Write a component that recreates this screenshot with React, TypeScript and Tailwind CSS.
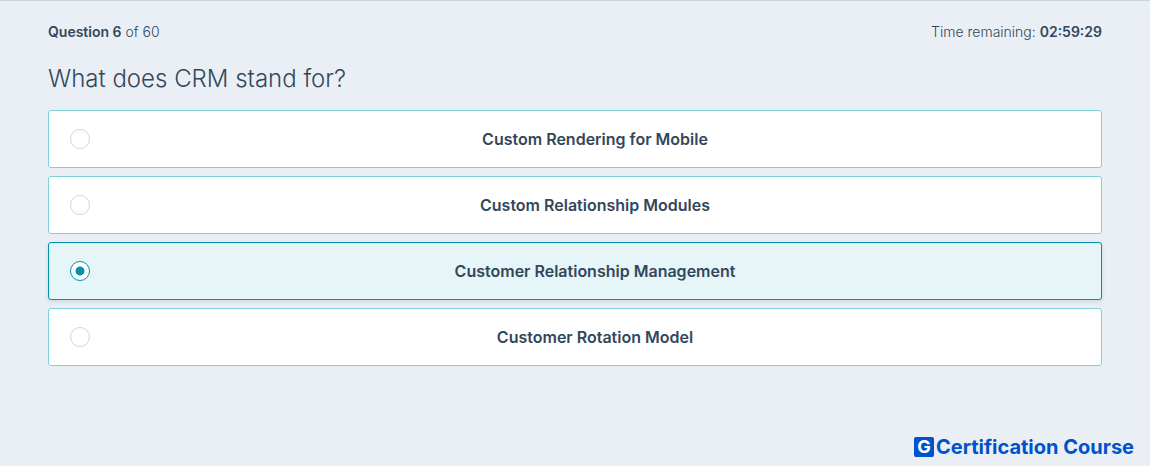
import { useState } from 'react'

const answers = [
  'Custom Rendering for Mobile',
  'Custom Relationship Modules',
  'Customer Relationship Management',
  'Customer Rotation Model',
]

export default function App() {
  const [selected, setSelected] = useState(2)

  return (
    <div className="min-h-screen flex flex-col bg-[#eaeff6] border-t border-[#cbd6e2] font-['Inter',sans-serif] text-[#33475b]">
      <main className="px-12 pt-5">
        <header className="flex items-center justify-between text-sm leading-[22px] font-light">
          <p>
            <strong className="font-semibold">Question 6</strong> of 60
          </p>
          <p>
            Time remaining: <strong className="font-semibold">02:59:29</strong>
          </p>
        </header>

        <form>
          <fieldset>
            <legend className="pt-[18px] pb-3.5 text-2xl leading-[35px] font-light">What does CRM stand for?</legend>

            <div className="flex flex-col gap-2">
              {answers.map((answer, i) => (
                <label
                  key={answer}
                  className="flex items-center h-[58px] px-[21px] rounded-[3px] border border-[#7fd1de] bg-white cursor-pointer has-checked:border-[#0091ae] has-checked:bg-[#e5f5f8] has-checked:shadow-[0_2px_4px_rgba(0,0,0,0.1)]"
                >
                  <input
                    type="radio"
                    name="answer"
                    checked={selected === i}
                    onChange={() => setSelected(i)}
                    className="appearance-none size-5 shrink-0 rounded-full border border-[#cbd6e2] bg-white checked:border-[#0091ae] checked:bg-radial checked:from-[#0091ae] checked:from-[4px] checked:to-white checked:to-[5px]"
                  />
                  <span className="flex-1 pl-5 text-center text-base leading-6 font-semibold">{answer}</span>
                </label>
              ))}
            </div>
          </fieldset>
        </form>
      </main>

      {/* Brand */}
      <footer className="mt-auto flex items-center justify-end gap-0.5 px-4 pt-8 pb-2 text-[#0052cc]">
        <span className="flex items-center justify-center size-5 rounded-xs bg-[#0052cc] text-white text-lg leading-5 font-bold">
          G
        </span>
        <span className="text-xl leading-[22px] font-bold">Certification Course</span>
      </footer>
    </div>
  )
}
